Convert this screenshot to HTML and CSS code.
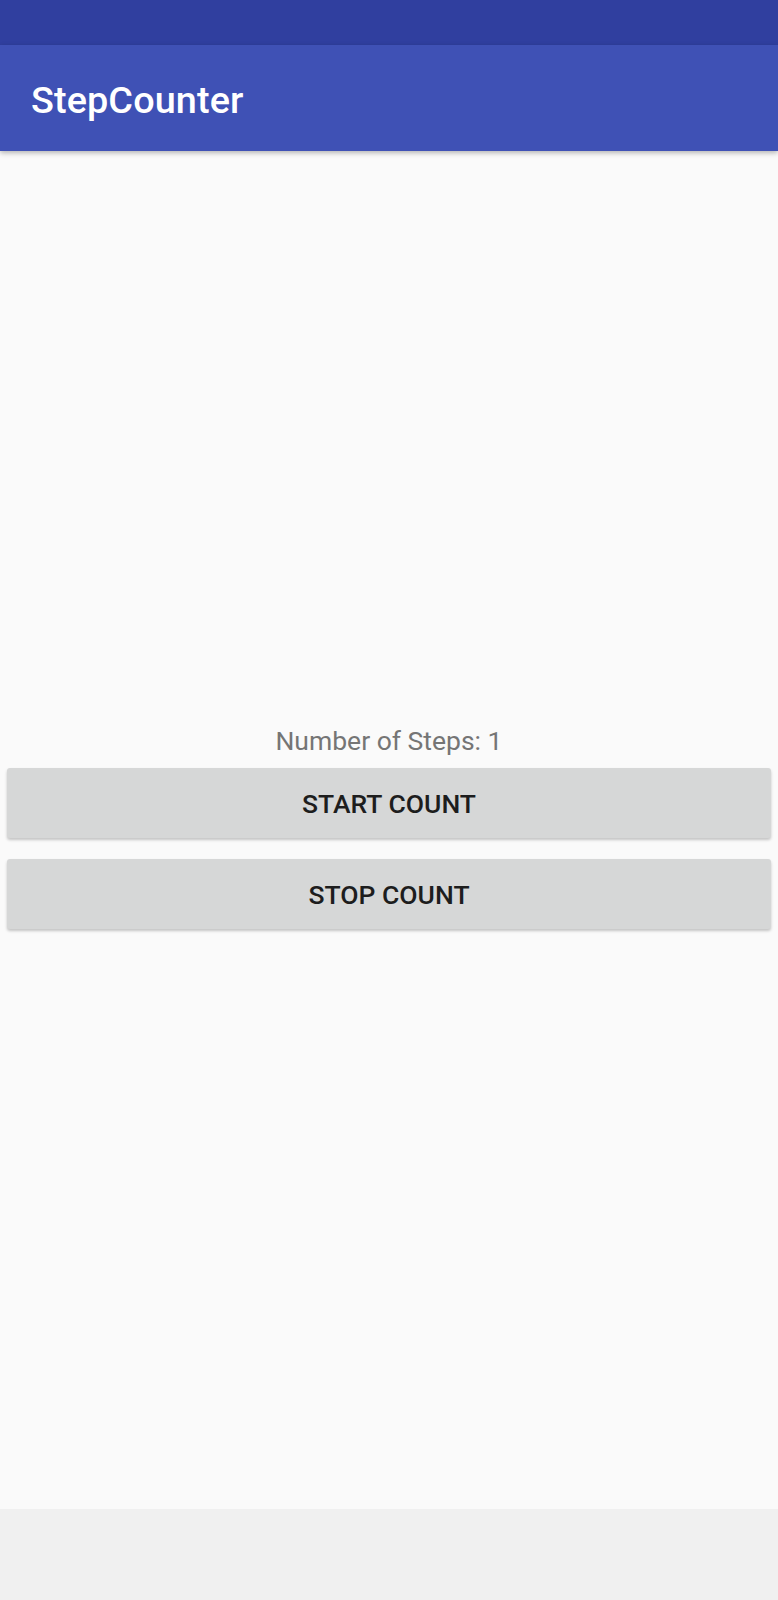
FILE: index.html
```html
<!DOCTYPE html>
<html>
<head>
<meta charset="utf-8">
<link rel="stylesheet" href="styles.css">
</head>
<body>
<div class="screen">
  <div class="status-bar"></div>
  <header class="app-bar"><h1 class="title">StepCounter</h1></header>
  <main class="content">
    <div class="group">
      <p class="steps">Number of Steps: 1</p>
      <button class="btn">START COUNT</button>
      <button class="btn">STOP COUNT</button>
    </div>
  </main>
  <div class="nav-area"></div>
</div>
</body>
</html>
```
FILE: styles.css
```css
html, body {
  margin: 0;
  padding: 0;
  background: #f0f0f0;
}
.screen {
  width: 778px;
  height: 1600px;
  display: flex;
  flex-direction: column;
  font-family: Roboto, "Noto Sans", sans-serif;
}
.status-bar {
  height: 45px;
  background: #303f9f;
}
.app-bar {
  height: 106px;
  background: #3f51b5;
  display: flex;
  align-items: center;
  padding: 4px 0 0 31px;
  box-sizing: border-box;
  box-shadow: 0 2px 5px rgba(0,0,0,0.28);
  position: relative;
  z-index: 1;
}
.title {
  margin: 0;
  color: #ffffff;
  font-size: 37.8px;
  font-weight: 500;
  letter-spacing: 0.1px;
}
.content {
  height: 1358px;
  background: #fafafa;
  padding-top: 574px;
  box-sizing: border-box;
}
.group {
  display: flex;
  flex-direction: column;
  align-items: center;
}
.steps {
  margin: 0 0 12px 0;
  height: 31px;
  line-height: 31px;
  font-size: 26.5px;
  color: #757575;
}
.btn {
  align-self: stretch;
  margin: 0 7px 21px 7px;
  height: 70px;
  border: none;
  border-radius: 3px;
  background: #d6d7d7;
  color: #1d1d1d;
  font-family: Roboto, "Noto Sans", sans-serif;
  font-size: 26.5px;
  font-weight: 500;
  letter-spacing: 0;
  padding: 0;
  box-shadow: 0 2px 3px rgba(0,0,0,0.22);
}
.nav-area {
  flex: 1;
  background: #f0f0f0;
}
```
